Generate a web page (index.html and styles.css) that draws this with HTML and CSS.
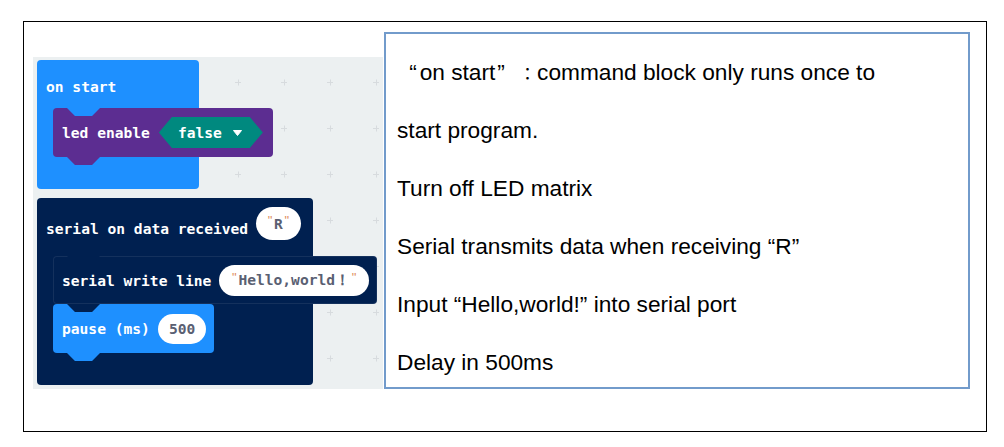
FILE: index.html
```html
<!DOCTYPE html>
<html lang="en">
<head>
<meta charset="utf-8">
<title>on start / serial</title>
<link rel="stylesheet" href="styles.css">
</head>
<body>
<div class="frame">
  <div class="canvas">
    <svg class="grid" width="350" height="332" aria-hidden="true">
      <defs>
        <pattern id="plus" width="46" height="46" patternUnits="userSpaceOnUse">
          <path d="M18 25.5H24M21.5 22.5V28.5" stroke="#d7dbde" stroke-width="1" fill="none"/>
        </pattern>
      </defs>
      <rect width="350" height="332" fill="url(#plus)"/>
    </svg>

    <div class="hat hat-start">
      <div class="head head-start"><span class="label">on start</span></div>
      <div class="body">
        <div class="stmt stmt-led">
          <span class="label">led enable</span>
          <span class="hex"><span>false</span><svg class="caret" width="9" height="6" viewBox="0 0 9 6"><path d="M0.5 0.5H8.5L4.5 5.5Z" fill="#fff" stroke="#fff" stroke-linejoin="round"/></svg></span>
        </div>
      </div>
      <div class="foot"></div>
    </div>

    <div class="hat hat-serial">
      <div class="head head-serial">
        <span class="label label-low">serial on data received</span>
        <span class="pill pill-r"><span class="q">"</span><span>R</span><span class="q">"</span></span>
      </div>
      <div class="body">
        <div class="stmt stmt-write">
          <span class="label">serial write line</span>
          <span class="pill pill-str"><span class="q">"</span><span>Hello,world<span class="bang">！</span></span><span class="q">"</span></span>
        </div>
        <div class="stmt stmt-pause">
          <span class="label">pause (ms)</span>
          <span class="pill pill-num">500</span>
        </div>
      </div>
      <div class="foot"></div>
    </div>
  </div>

  <div class="note">
    <div class="line"><span class="fw fw-open">“</span>on start<span class="fw fw-close">”</span><span class="fw fw-colon">：</span>command block only runs once to</div>
    <div class="line">start program.</div>
    <div class="line">Turn off LED matrix</div>
    <div class="line">Serial transmits data when receiving “R”</div>
    <div class="line">Input “Hello,world!” into serial port</div>
    <div class="line">Delay in 500ms</div>
  </div>
</div>
</body>
</html>
```

FILE: styles.css
```css
html, body {
  margin: 0;
  background: #ffffff;
}

.frame {
  box-sizing: border-box;
  width: 964px;
  height: 411px;
  margin: 21px 0 0 23px;
  border: 1px solid #000;
  display: flex;
  align-items: flex-end;
  gap: 1px;
  padding: 0 0 42px 9px;
}

/* ---------- block canvas ---------- */
.canvas {
  position: relative;
  box-sizing: border-box;
  width: 350px;
  height: 332px;
  flex: none;
  background: #ecf0f1;
  padding: 3px 4px;
  display: flex;
  flex-direction: column;
  align-items: flex-start;
  gap: 9px;
  font-family: "DejaVu Sans Mono", "Liberation Mono", "Noto Sans CJK SC", monospace;
  font-weight: bold;
  font-size: 14.6px;
  color: #fff;
}

.grid {
  position: absolute;
  left: 0;
  top: 0;
}

.label {
  white-space: nowrap;
}

.label-low {
  margin-top: 9px;
}

.hat {
  position: relative;
  display: flex;
  flex-direction: column;
  align-items: flex-start;
  border-radius: 4px;
  box-sizing: border-box;
}

.hat-start {
  width: 162px;
  background: #1e90ff;
}

.hat-serial {
  width: 276px;
  background: #002050;
}

.head {
  box-sizing: border-box;
  display: flex;
  align-items: center;
  gap: 8px;
  padding-left: 9px;
}

.head-start {
  height: 48px;
  padding-top: 4px;
}

.head-serial {
  padding: 9px 8px 16px 9px;
}

.body {
  padding-left: 16px;
  display: flex;
  flex-direction: column;
  align-items: flex-start;
}

.foot {
  height: 32px;
}

/* statement blocks */
.stmt {
  position: relative;
  box-sizing: border-box;
  display: flex;
  align-items: center;
  gap: 8px;
  padding: 0 8px 0 9px;
  border-radius: 4px;
}

.stmt::before,
.stmt::after {
  content: "";
  position: absolute;
  left: 14px;
  width: 33px;
  height: 8px;
  clip-path: polygon(0 0, 100% 0, 76% 100%, 24% 100%);
}

.stmt::before {
  top: 0;
  background: var(--notch);
}

.stmt::after {
  top: 100%;
  background: inherit;
}

.stmt-led {
  height: 49px;
  background: #5c2d91;
  --notch: #1e90ff;
  gap: 9px;
  padding-right: 10px;
}

.stmt-write {
  height: 48px;
  background: #002050;
  --notch: #002050;
  box-shadow: inset 0 0 0 1px rgba(255, 255, 255, 0.08);
}

.stmt-pause {
  height: 49px;
  background: #1e90ff;
  --notch: #002050;
}

/* inputs */
.hex {
  display: inline-flex;
  align-items: center;
  gap: 11px;
  height: 31px;
  padding: 0 21px 0 19px;
  background: #00897f;
  clip-path: polygon(0 50%, 13px 0, calc(100% - 13px) 0, 100% 50%, calc(100% - 13px) 100%, 13px 100%);
}

.caret {
  display: block;
}

.pill {
  box-sizing: border-box;
  display: inline-flex;
  align-items: center;
  background: #fff;
  color: #5a6072;
  border-radius: 999px;
  white-space: nowrap;
}

.pill-r {
  height: 33px;
  padding: 0 10px;
}

.pill-str {
  height: 31px;
  padding: 0 11px;
}

.pill-num {
  height: 30px;
  padding: 0 11px;
}

.bang {
  display: inline-block;
  width: 15px;
  text-align: center;
  font-family: "Liberation Mono", monospace;
}

.q {
  display: block;
  width: 8px;
  height: 10px;
  line-height: 12px;
  margin-bottom: 7px;
  text-align: center;
  font-family: "Liberation Sans", sans-serif;
  font-weight: normal;
  font-size: 13px;
  color: #e08d5e;
}

/* ---------- description box ---------- */
.note {
  box-sizing: border-box;
  width: 586px;
  height: 357px;
  flex: none;
  border: 2px solid #729bcb;
  padding: 9px 11px 0;
  font-family: "Liberation Sans", Arial, sans-serif;
  font-size: 22.7px;
  color: #000;
}

.line {
  line-height: 58px;
  height: 58px;
  white-space: nowrap;
}

.line:last-child {
  height: 55px;
}

.fw {
  display: inline-block;
  box-sizing: border-box;
  width: 1em;
}

.fw-open {
  text-align: right;
  padding-right: 3px;
}

.fw-close {
  text-align: left;
  padding-left: 2px;
}

.fw-colon {
  width: 19px;
  text-align: left;
  padding-left: 1px;
  font-size: 17px;
  font-family: "Noto Sans CJK JP", "Noto Sans CJK SC", sans-serif;
}
```
